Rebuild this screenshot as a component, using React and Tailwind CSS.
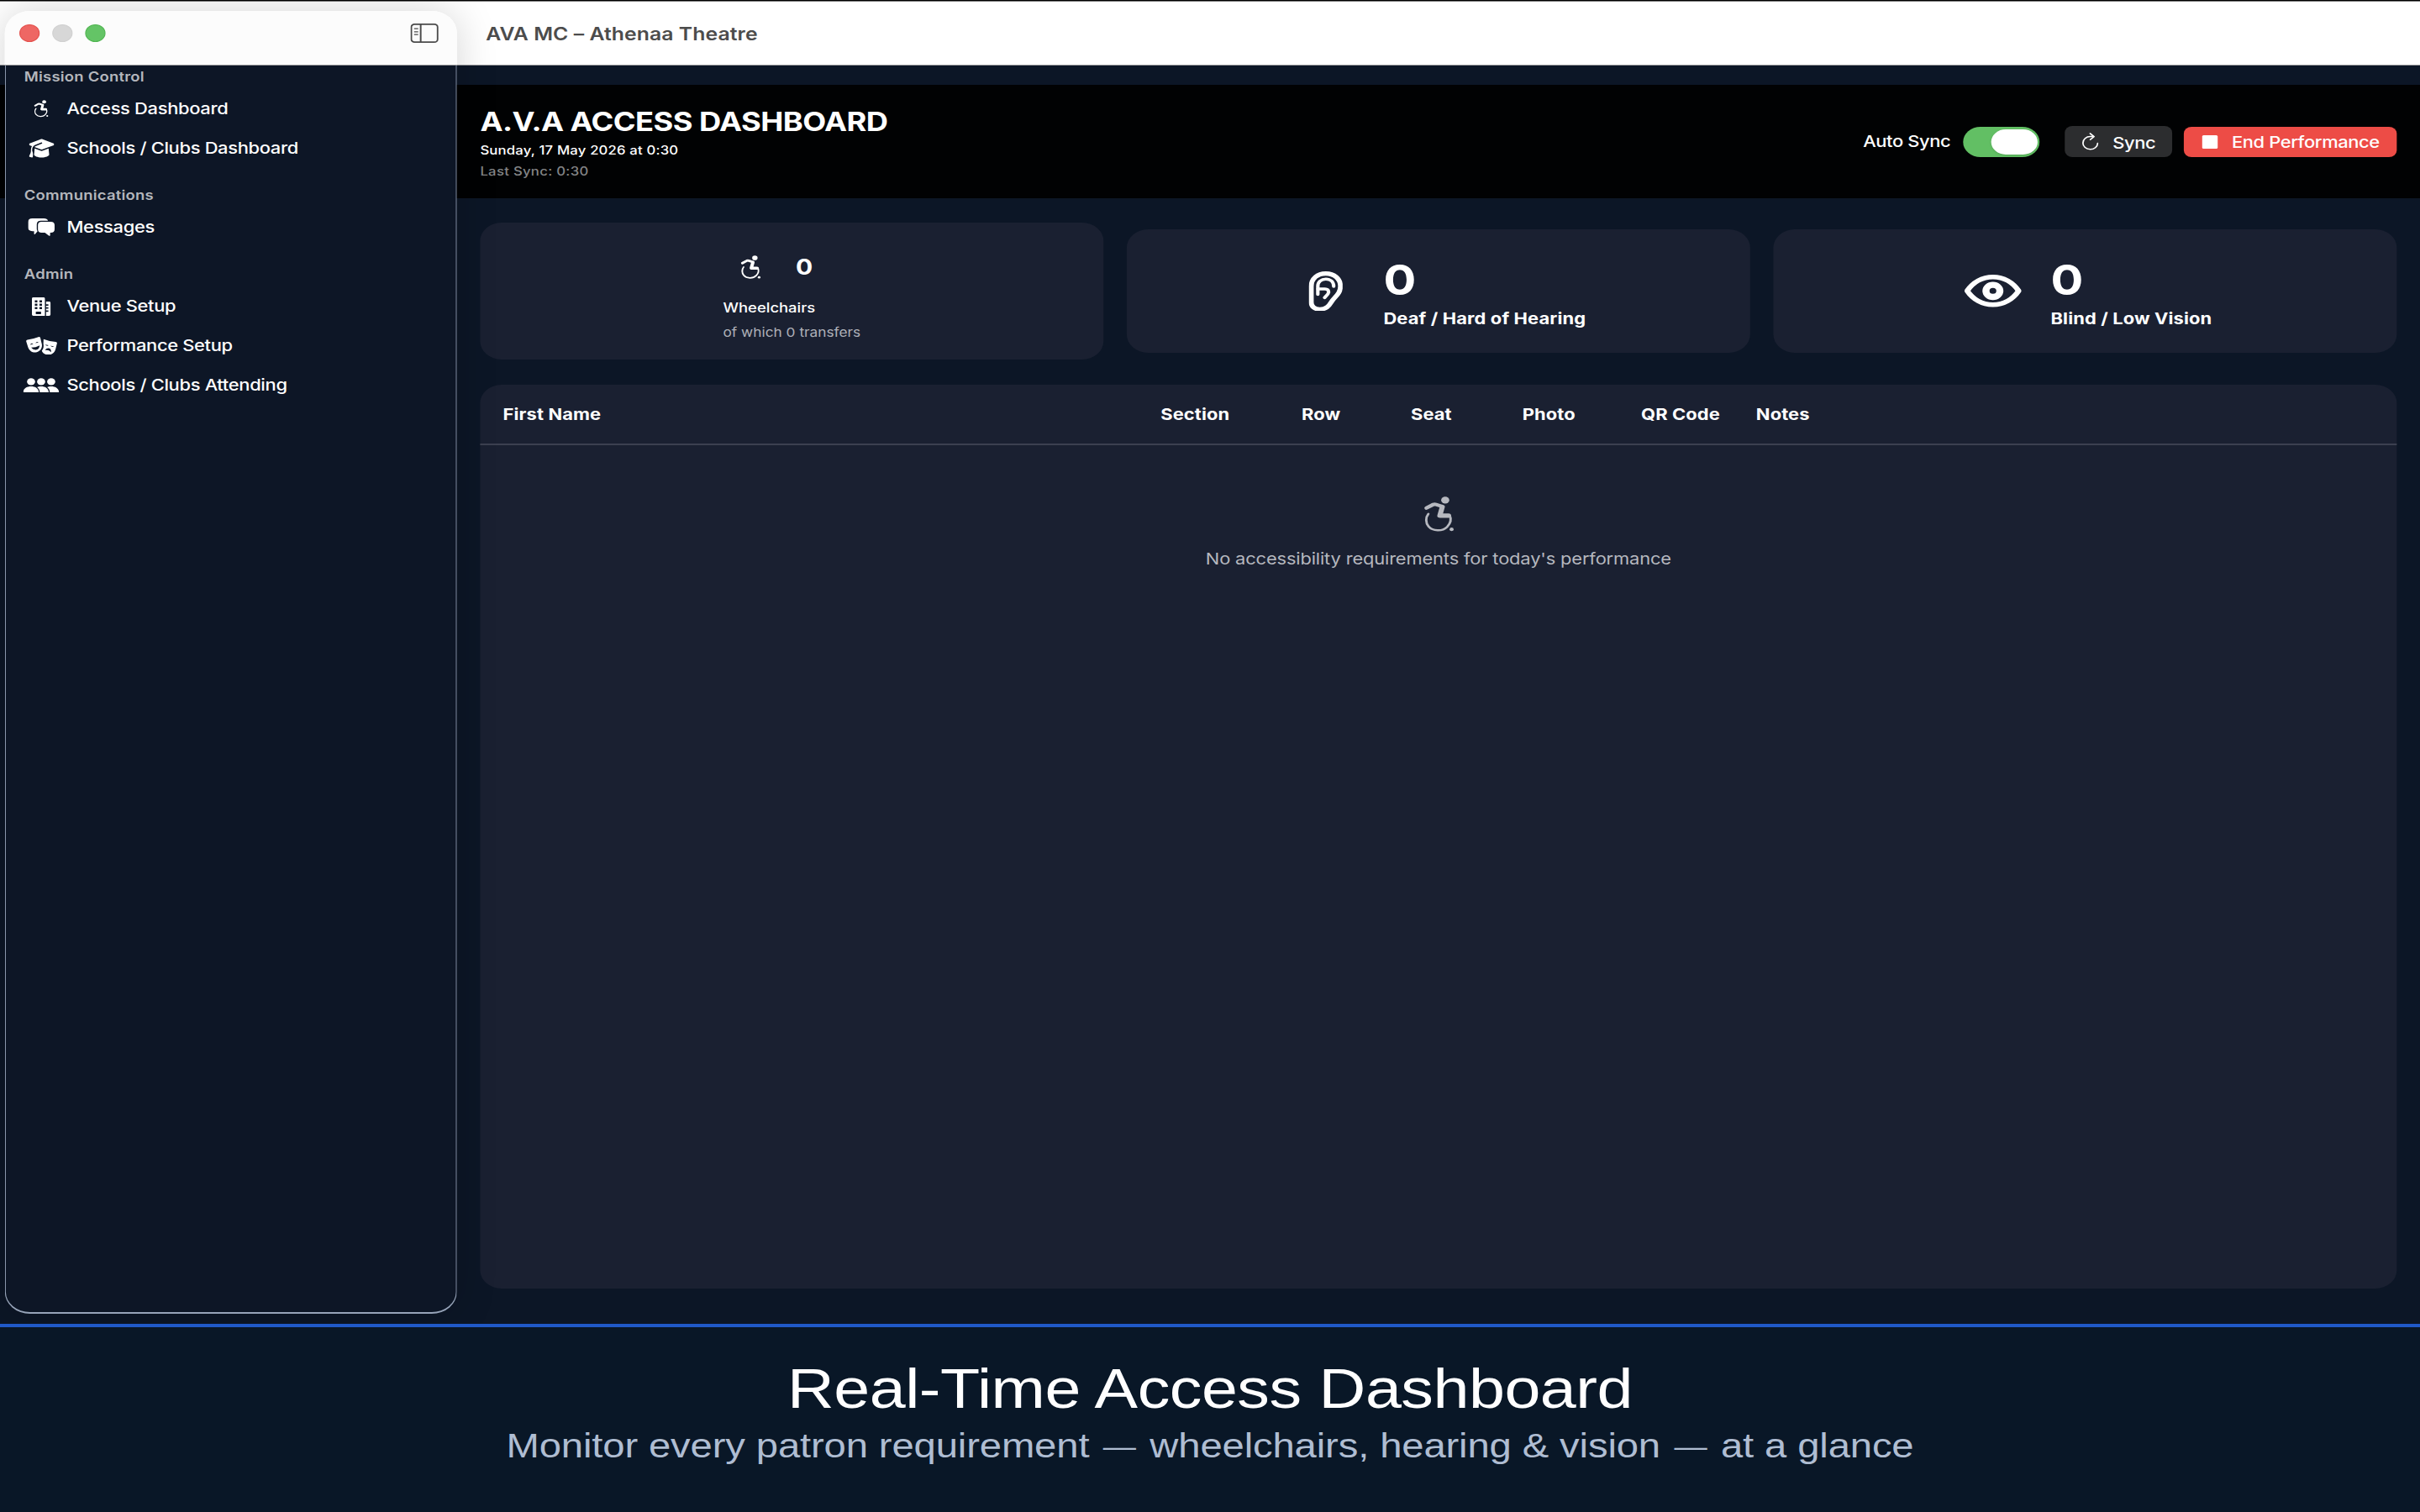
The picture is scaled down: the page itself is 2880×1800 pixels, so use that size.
import { FaGraduationCap } from 'react-icons/fa6';

function WheelchairIcon({ className }) {
  return (
    <svg viewBox="0 0 31 42" className={className} fill="none" stroke="currentColor" strokeLinecap="round" strokeLinejoin="round">
      <circle cx="22" cy="4.4" r="4.2" fill="currentColor" stroke="none" />
      <path d="M2.6 13.8 L9.6 9.6 Q11 9 12.6 9.6 L18 11.6" strokeWidth="4.2" />
      <path d="M19 12.4 L16.4 22.8 H25.5" strokeWidth="5.2" />
      <path d="M4.6 20.8 C1.6 25 1.6 31.6 4.8 35.8 C9 41.4 19 42 24 36.2 C28 31.4 28.4 27 26.8 23" strokeWidth="2.5" />
      <circle cx="28.6" cy="39.2" r="2.1" fill="currentColor" stroke="none" />
    </svg>
  );
}

function ChatIcon({ className }) {
  return (
    <svg viewBox="0 0 27.4 21" className={className} fill="currentColor">
      <path d="M4.4 0 H16.4 Q19.8 0 20.6 2.8 H13.4 Q9 2.8 9 7.2 V12.4 Q9 14 9.8 15.2 L7.4 18.4 Q6.2 19.6 6.2 18 V15.2 H4.4 Q0 15.2 0 10.8 V4.4 Q0 0 4.4 0 Z" />
      <path d="M14 4 H23.4 Q27.4 4 27.4 8 V13 Q27.4 17 23.4 17 H22.8 V19.8 Q22.8 21.6 21.4 20.4 L17.4 17 H14 Q10.2 17 10.2 13 V8 Q10.2 4 14 4 Z" />
    </svg>
  );
}

function BuildingIcon({ className }) {
  return (
    <svg viewBox="0 0 19.2 22" className={className} fill="currentColor" fillRule="evenodd">
      <path d="M1.4 0 H12 Q13.4 0 13.4 1.4 V22 H1.4 Q0 22 0 20.6 V1.4 Q0 0 1.4 0 Z M3 3.6 V6 H5.6 V3.6 Z M7.8 3.6 V6 H10.4 V3.6 Z M3 7.6 V10 H5.6 V7.6 Z M7.8 7.6 V10 H10.4 V7.6 Z M3 11.6 V14 H5.6 V11.6 Z M7.8 11.6 V14 H10.4 V11.6 Z M4 17 V20 H9.4 V17 Z" />
      <path d="M14.6 5 H17.8 Q19.2 5 19.2 6.4 V20.6 Q19.2 22 17.8 22 H14.6 V17.2 H17 V15.4 H14.6 V13.6 H17 V11.8 H14.6 V10 H17 V8.2 H14.6 Z" />
    </svg>
  );
}

function MasksIcon({ className }) {
  return (
    <svg viewBox="0 0 32 21.6" className={className} fill="currentColor" fillRule="evenodd">
      <path d="M1.4 3.6 Q7 2.6 12.6 .2 Q14.2 -.3 14.7 1.2 L16.2 8.4 C17 13.4 14.6 17.2 11 18.2 C7 19.2 3.4 17 2 12.4 L.1 5.4 Q-.2 4 1.4 3.6 Z M4 9.6 L7.4 8.4 Q5.4 6.6 4 9.6 Z M9.6 7.6 L13 6.6 Q10.8 4.8 9.6 7.6 Z M5.2 12.8 Q10 12.8 14 10.2 Q13.6 15 10 15.4 Q7 15.6 5.2 12.8 Z" />
      <path d="M18 2.8 Q24 5.6 30.6 6 Q32.2 6.2 31.9 7.8 L30.4 14.8 C29.2 19.6 26.2 21.8 22 21.3 C19 21 16.8 19.2 16.2 16.6 C17.8 14.4 18.4 11.6 17.8 8.2 Z M19.6 9.2 Q21.4 11.6 23.2 10 Z M25 10.6 Q27 13 28.6 11.4 Z M19.6 16 Q23 15 25.8 18.2 Q26 13.8 22.8 13.6 Q20.6 13.6 19.6 16 Z" />
    </svg>
  );
}

function PeopleIcon({ className }) {
  return (
    <svg viewBox="0 0 37 17.4" className={className} fill="currentColor">
      <circle cx="8.1" cy="4.4" r="4.2" />
      <circle cx="18.5" cy="4.4" r="4.2" />
      <circle cx="28.9" cy="4.4" r="4.2" />
      <path d="M1 17.4 Q0 17.4 0 16.2 C.6 12 4 10 8.1 10 S15.4 12 16 16.2 Q16 17.4 15 17.4 Z" />
      <path d="M17 17.4 C17.2 14.6 16.2 12.4 14.4 10.9 C15.6 10.2 17 10 18.5 10 C22.6 10 25.6 12 26.3 16.2 Q26.3 17.4 25.4 17.4 Z" />
      <path d="M27.4 17.4 C27.6 14.6 26.6 12.4 24.8 10.9 C26 10.2 27.4 10 28.9 10 C33 10 36.2 12 37 16.2 Q37 17.4 36 17.4 Z" />
    </svg>
  );
}

function SidebarIcon() {
  return (
    <svg viewBox="0 0 29 23" className="w-[29px] h-[23px]" fill="none" stroke="#4b4b4b" strokeWidth="1.7">
      <rect x="0.9" y="0.9" width="27.2" height="21.2" rx="3.4" />
      <path d="M10.6 1 V22" />
      <path d="M3.8 6.2 H8 M3.8 9.8 H8 M3.8 13.2 H8" strokeWidth="1.2" />
    </svg>
  );
}

function EarIcon() {
  return (
    <svg viewBox="0 0 35.4 47.8" className="w-[35.4px] h-[47.8px]" fill="none" stroke="currentColor" strokeLinecap="round" strokeLinejoin="round">
      <path d="M2.6 18 C2.6 8.6 9 2.6 17.6 2.6 C26.4 2.6 32.8 9 32.8 17.8 C32.8 26.6 27 30 23.4 36.4 C20.6 41.6 18 45.2 11.4 45.2 C6 45.2 2.6 42 2.6 37 Z" strokeWidth="5.1" />
      <path d="M9.4 27.4 V17.4 C9.4 12.4 13 9.2 17.7 9.2 C22.4 9.2 25.8 12.6 25.8 18" strokeWidth="3.6" />
      <path d="M9.6 21 H16.4 C20.4 21 21.4 24 19.8 27 L16.4 31.4" strokeWidth="3.6" />
    </svg>
  );
}

function EyeIcon() {
  return (
    <svg viewBox="0 0 59.6 38.6" className="w-[59.6px] h-[38.6px]" fill="none" stroke="currentColor" strokeLinejoin="round">
      <path d="M3.2 19.3 C9 9.6 18.4 2.8 29.8 2.8 S50.6 9.6 56.4 19.3 C50.6 29 41.2 35.8 29.8 35.8 S9 29 3.2 19.3 Z" strokeWidth="5.6" />
      <circle cx="29.8" cy="19.3" r="7.2" strokeWidth="7.3" />
    </svg>
  );
}

function SyncIcon() {
  return (
    <svg viewBox="0 0 17 21" className="w-[17px] h-[21px]" fill="none" stroke="currentColor" strokeWidth="1.5" strokeLinecap="round" strokeLinejoin="round">
      <path d="M16 12.4 A7.6 7.6 0 1 1 8.4 4.6 H12" />
      <path d="M8.2 0.9 L12.2 4.6 L8.4 8.2" />
    </svg>
  );
}

const sections = [
  {
    title: 'Mission Control',
    items: [
      { label: 'Access Dashboard', icon: <WheelchairIcon className="w-[15px] h-[20.5px]" /> },
      { label: 'Schools / Clubs Dashboard', icon: <FaGraduationCap preserveAspectRatio="none" className="w-[26px] h-[25px]" /> },
    ],
  },
  {
    title: 'Communications',
    items: [{ label: 'Messages', icon: <ChatIcon className="w-[27.4px] h-[21px]" /> }],
  },
  {
    title: 'Admin',
    items: [
      { label: 'Venue Setup', icon: <BuildingIcon className="w-[19.2px] h-[22px]" /> },
      { label: 'Performance Setup', icon: <MasksIcon className="w-[32px] h-[21.6px]" /> },
      { label: 'Schools / Clubs Attending', icon: <PeopleIcon className="w-[37px] h-[17.4px]" /> },
    ],
  },
];

function Sidebar() {
  return (
    <aside className="z-10 col-start-1 row-start-1 mt-[13px] ml-[4.8px] flex h-[1550.5px] w-[467px] flex-col rounded-[26px] shadow-[0_0_44px_rgba(0,0,0,0.17)]">
      <div className="flex h-[65px] shrink-0 items-start justify-between rounded-t-[26px] bg-[#fcfcfc] border-b border-[#9a9a9c] pt-[15px] pr-[19px] pl-[15.6px]">
        <div className="flex gap-[12.6px] pt-px">
          <span className="size-[21px] rounded-full border border-[#e4504c] bg-[#ee6764]" />
          <span className="size-[21px] rounded-full border border-[#d0d0d0] bg-[#d7d7d7]" />
          <span className="size-[21px] rounded-full border border-[#4fb550] bg-[#64c466]" />
        </div>
        <SidebarIcon />
      </div>
      <nav className="flex-1 rounded-b-[26px] border-x border-b-2 border-[#97a4b9] bg-[#0d1626]">
        {sections.map((section, i) => (
          <div key={section.title} className={i > 0 ? 'mt-[19px]' : ''}>
            <h3 className="flex h-[28px] items-center pb-[2px] pl-[19.2px] text-[16px] font-semibold tracking-[0.2px] text-[#b4b6bc]">
              {section.title}
            </h3>
            {section.items.map((item) => (
              <div key={item.label} className="flex h-[47px] items-center gap-[7px] pl-[18.2px] text-[19px] font-medium tracking-[-0.28px] text-white">
                <span className="flex w-[38px] justify-center">{item.icon}</span>
                <span className="pt-[2px]">{item.label}</span>
              </div>
            ))}
          </div>
        ))}
      </nav>
    </aside>
  );
}

function Header() {
  return (
    <header className="flex h-[135px] items-center justify-between bg-[#010203] pr-[24px] pl-[496px]">
      <div className="pt-[2px]">
        <h1 className="text-[31.5px] leading-[40px] font-bold tracking-[-0.5px]">A.V.A ACCESS DASHBOARD</h1>
        <p className="text-[14.5px] leading-[28px] font-medium tracking-[0.15px]">Sunday, 17 May 2026 at 0:30</p>
        <p className="text-[14.5px] leading-[22px] font-medium tracking-[0.25px] text-[#838486]">Last Sync: 0:30</p>
      </div>
      <div className="flex items-center text-[19px] font-medium tracking-[-0.33px]">
        <span className="pt-[2px]">Auto Sync</span>
        <span className="ml-[13px] flex h-[36px] w-[79px] items-center justify-end rounded-full bg-[#62bf64] pr-[2.5px]">
          <span className="h-[30px] w-[47.5px] rounded-full bg-white shadow-sm" />
        </span>
        <button className="ml-[26px] flex h-[37px] w-[111px] items-center gap-[14.5px] rounded-[8px] bg-[#2c2d2f] pl-[18px] leading-none">
          <SyncIcon />
          <span className="pt-[3px]">Sync</span>
        </button>
        <button className="ml-[12px] flex h-[36px] w-[220px] items-center gap-[14.5px] rounded-[8px] bg-[#ed4c46] pl-[19px] leading-none whitespace-nowrap">
          <span className="size-[16px] rounded-[1.5px] bg-white" />
          <span className="pt-[2px]">End Performance</span>
        </button>
      </div>
    </header>
  );
}

function StatCard({ icon, value, label }) {
  return (
    <div className="flex h-[147px] items-center justify-center gap-[23.5px] rounded-[22px] bg-[#1a2031]">
      <span className="flex w-[72px] justify-center">{icon}</span>
      <div className="pt-[10px]">
        <div className="text-[50px] leading-[56px] font-bold">{value}</div>
        <div className="text-[19px] leading-[37px] font-bold tracking-[0.12px]">{label}</div>
      </div>
    </div>
  );
}

function AttendeeTable() {
  return (
    <section className="mt-[30px] h-[1076px] rounded-[22px] bg-[#1a2031]">
      <div className="grid h-[72px] grid-cols-[650px_130px_130px_98px_145px_127px_1fr] items-center border-b-2 border-[#3c4050] pt-[2px] pl-[23.6px] text-center text-[19px] font-bold tracking-[0.1px]">
        <span className="text-left">First Name</span>
        <span>Section</span>
        <span>Row</span>
        <span>Seat</span>
        <span>Photo</span>
        <span>QR Code</span>
        <span className="pl-[14.5px] text-left">Notes</span>
      </div>
      <div className="flex flex-col items-center pt-[61px] text-[#b6b8bf]">
        <WheelchairIcon className="h-[42px] w-[31px]" />
        <p className="mt-[19px] text-[19px] leading-[28px] tracking-[-0.14px]">No accessibility requirements for today's performance</p>
      </div>
    </section>
  );
}

export default function App() {
  return (
    <div className="h-[1800px] w-[2880px] overflow-hidden bg-[#091727]">
      {/* the whole window is drawn 2500 wide and stretched sideways */}
      <div className="flex h-[1800px] w-[2500px] origin-top-left scale-x-[1.152] flex-col font-['Inter',sans-serif] text-white">
        <div className="grid h-[1576px] shrink-0 grid-cols-[2500px] overflow-hidden bg-[#0c1626]">
          <Sidebar />
          <div className="col-start-1 row-start-1">
            <div className="h-px bg-black" />
            <div className="flex h-[77px] items-center border-t border-b border-t-[#7a7a7a] border-b-[#9a9a9c] bg-white pt-px pl-[502px] text-[21.5px] font-semibold tracking-[0.06px] text-[#4c4c4c]">
              AVA MC – Athenaa Theatre
            </div>
            <div className="h-[23px]" />
            <Header />
            <main className="pr-[24px] pl-[496px]">
              <div className="mt-[29px] grid grid-cols-3 items-center gap-[24px]">
                <div className="flex h-[163px] items-center justify-center rounded-[22px] bg-[#1a2031]">
                  <div className="pt-[15px]">
                    <div className="flex h-[40px] items-center gap-[36px] pl-[18px]">
                      <WheelchairIcon className="h-[28px] w-[21px]" />
                      <span className="text-[26px] leading-none font-bold">0</span>
                    </div>
                    <div className="mt-[14px] text-[16px] leading-[29px] font-medium">Wheelchairs</div>
                    <div className="text-[15px] leading-[29px] text-[#aeb0b8]">of which 0 transfers</div>
                  </div>
                </div>
                <StatCard icon={<EarIcon />} value="0" label="Deaf / Hard of Hearing" />
                <StatCard icon={<EyeIcon />} value="0" label="Blind / Low Vision" />
              </div>
              <AttendeeTable />
            </main>
          </div>
        </div>
        <footer className="flex-1 border-t-4 border-[#2059c8] bg-[#091727] text-center font-['Liberation_Sans',sans-serif]">
          <h2 className="mt-[36px] text-[67px] leading-[74px] tracking-[-0.4px]">Real-Time Access Dashboard</h2>
          <p className="mt-[8px] text-[41px] leading-[46px] tracking-[-0.12px] text-[#afbdd2]">
            Monitor every patron requirement <span className="mx-[3px] align-[2px] text-[34px] leading-none">—</span> wheelchairs, hearing &amp; vision{' '}
            <span className="mx-[3px] align-[2px] text-[34px] leading-none">—</span> at a glance
          </p>
        </footer>
      </div>
    </div>
  );
}
